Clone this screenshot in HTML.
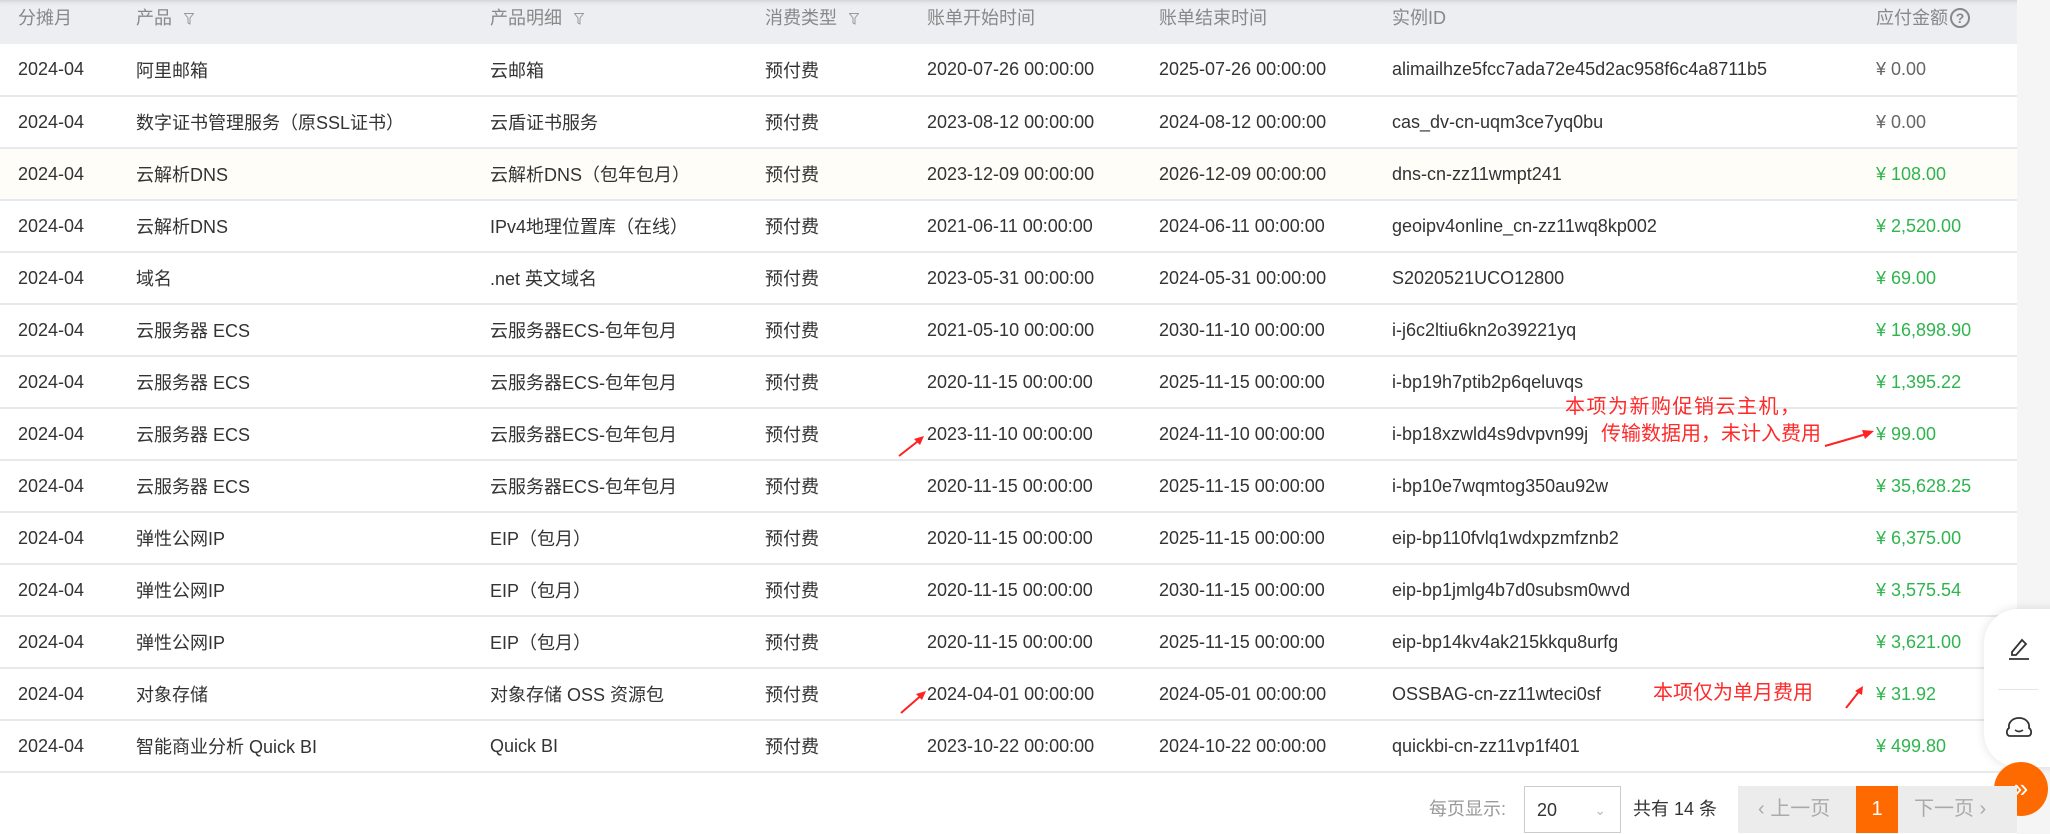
<!DOCTYPE html>
<html><head><meta charset="utf-8"><style>
*{margin:0;padding:0;box-sizing:border-box}
body{width:2050px;height:834px;background:#fff;font-family:"Liberation Sans","Noto Sans CJK SC",sans-serif;font-size:18px;color:#333;position:relative;overflow:hidden}
.rs{position:absolute;left:2017px;top:0;width:33px;height:834px;background:#f5f5f5}
table{position:absolute;left:0;top:0;width:2017px;border-collapse:collapse;table-layout:fixed}
th{height:44px;background:#eceef1;color:#888;font-weight:normal;text-align:left;padding:0;vertical-align:top;padding-top:4px;box-shadow:inset 0 6px 6px -6px #bbb}
td{height:52px;border-bottom:2px solid #e8e9ec;padding:0;white-space:nowrap}
th:first-child,td:first-child{padding-left:18px}
tr.y td{background:#fffdf7}
.g{color:#2fb54e}.z{color:#666}
.f{display:inline-block;width:10px;height:12px;margin-left:12px;vertical-align:-1px}
.q{display:inline-block;width:20px;height:20px;border:2px solid #888;border-radius:50%;font-size:14px;line-height:16px;text-align:center;vertical-align:1px;font-weight:bold;margin-left:2px}
.red{position:absolute;color:#ff2a2a;font-size:20px;line-height:26px;white-space:nowrap}
.ar{position:absolute}
.panel{position:absolute;left:1984px;top:609px;width:80px;height:158px;background:#fff;border-radius:34px 0 0 34px;box-shadow:0 0 10px rgba(0,0,0,.12)}
.orb{position:absolute;left:1994px;top:762px;width:54px;height:54px;border-radius:50%;background:#ff6a00;color:#fff;font-size:26px;text-align:center;line-height:52px}
.pg{position:absolute;top:786px;height:47px;line-height:47px}
</style></head><body>
<div class="rs"></div>
<table>
<colgroup><col style="width:136px"><col style="width:354px"><col style="width:275px"><col style="width:162px"><col style="width:232px"><col style="width:233px"><col style="width:484px"><col style="width:141px"></colgroup>
<tr><th>分摊月</th><th>产品<svg class="f" viewBox="0 0 10 12"><path d="M0.5 0.5H9.5L6 5V11L4 10V5Z" fill="none" stroke="#999"/></svg></th><th>产品明细<svg class="f" viewBox="0 0 10 12"><path d="M0.5 0.5H9.5L6 5V11L4 10V5Z" fill="none" stroke="#999"/></svg></th><th>消费类型<svg class="f" viewBox="0 0 10 12"><path d="M0.5 0.5H9.5L6 5V11L4 10V5Z" fill="none" stroke="#999"/></svg></th><th>账单开始时间</th><th>账单结束时间</th><th>实例ID</th><th>应付金额<span class="q">?</span></th></tr>
<tr><td>2024-04</td><td>阿里邮箱</td><td>云邮箱</td><td>预付费</td><td>2020-07-26 00:00:00</td><td>2025-07-26 00:00:00</td><td>alimailhze5fcc7ada72e45d2ac958f6c4a8711b5</td><td class="z">¥ 0.00</td></tr>
<tr><td>2024-04</td><td>数字证书管理服务（原SSL证书）</td><td>云盾证书服务</td><td>预付费</td><td>2023-08-12 00:00:00</td><td>2024-08-12 00:00:00</td><td>cas_dv-cn-uqm3ce7yq0bu</td><td class="z">¥ 0.00</td></tr>
<tr class="y"><td>2024-04</td><td>云解析DNS</td><td>云解析DNS（包年包月）</td><td>预付费</td><td>2023-12-09 00:00:00</td><td>2026-12-09 00:00:00</td><td>dns-cn-zz11wmpt241</td><td class="g">¥ 108.00</td></tr>
<tr><td>2024-04</td><td>云解析DNS</td><td>IPv4地理位置库（在线）</td><td>预付费</td><td>2021-06-11 00:00:00</td><td>2024-06-11 00:00:00</td><td>geoipv4online_cn-zz11wq8kp002</td><td class="g">¥ 2,520.00</td></tr>
<tr><td>2024-04</td><td>域名</td><td>.net 英文域名</td><td>预付费</td><td>2023-05-31 00:00:00</td><td>2024-05-31 00:00:00</td><td>S2020521UCO12800</td><td class="g">¥ 69.00</td></tr>
<tr><td>2024-04</td><td>云服务器 ECS</td><td>云服务器ECS-包年包月</td><td>预付费</td><td>2021-05-10 00:00:00</td><td>2030-11-10 00:00:00</td><td>i-j6c2ltiu6kn2o39221yq</td><td class="g">¥ 16,898.90</td></tr>
<tr><td>2024-04</td><td>云服务器 ECS</td><td>云服务器ECS-包年包月</td><td>预付费</td><td>2020-11-15 00:00:00</td><td>2025-11-15 00:00:00</td><td>i-bp19h7ptib2p6qeluvqs</td><td class="g">¥ 1,395.22</td></tr>
<tr><td>2024-04</td><td>云服务器 ECS</td><td>云服务器ECS-包年包月</td><td>预付费</td><td>2023-11-10 00:00:00</td><td>2024-11-10 00:00:00</td><td>i-bp18xzwld4s9dvpvn99j</td><td class="g">¥ 99.00</td></tr>
<tr><td>2024-04</td><td>云服务器 ECS</td><td>云服务器ECS-包年包月</td><td>预付费</td><td>2020-11-15 00:00:00</td><td>2025-11-15 00:00:00</td><td>i-bp10e7wqmtog350au92w</td><td class="g">¥ 35,628.25</td></tr>
<tr><td>2024-04</td><td>弹性公网IP</td><td>EIP（包月）</td><td>预付费</td><td>2020-11-15 00:00:00</td><td>2025-11-15 00:00:00</td><td>eip-bp110fvlq1wdxpzmfznb2</td><td class="g">¥ 6,375.00</td></tr>
<tr><td>2024-04</td><td>弹性公网IP</td><td>EIP（包月）</td><td>预付费</td><td>2020-11-15 00:00:00</td><td>2030-11-15 00:00:00</td><td>eip-bp1jmlg4b7d0subsm0wvd</td><td class="g">¥ 3,575.54</td></tr>
<tr><td>2024-04</td><td>弹性公网IP</td><td>EIP（包月）</td><td>预付费</td><td>2020-11-15 00:00:00</td><td>2025-11-15 00:00:00</td><td>eip-bp14kv4ak215kkqu8urfg</td><td class="g">¥ 3,621.00</td></tr>
<tr><td>2024-04</td><td>对象存储</td><td>对象存储 OSS 资源包</td><td>预付费</td><td>2024-04-01 00:00:00</td><td>2024-05-01 00:00:00</td><td>OSSBAG-cn-zz11wteci0sf</td><td class="g">¥ 31.92</td></tr>
<tr><td>2024-04</td><td>智能商业分析 Quick BI</td><td>Quick BI</td><td>预付费</td><td>2023-10-22 00:00:00</td><td>2024-10-22 00:00:00</td><td>quickbi-cn-zz11vp1f401</td><td class="g">¥ 499.80</td></tr>
</table>
<div class="red" style="left:1565px;top:394px;letter-spacing:1.5px">本项为新购促销云主机，</div>
<div class="red" style="left:1601px;top:421px">传输数据用，未计入费用</div>
<div class="red" style="left:1653px;top:680px">本项仅为单月费用</div>
<svg class="ar" style="left:898px;top:434px" width="28" height="24" viewBox="0 0 28 24"><path d="M1 22L24 4" stroke="#f22" stroke-width="2"/><path d="M26 2L16 5L22 11Z" fill="#f22"/></svg>
<svg class="ar" style="left:1824px;top:428px" width="52" height="20" viewBox="0 0 52 20"><path d="M1 18L46 5" stroke="#f22" stroke-width="2"/><path d="M50 3L38 2L41 11Z" fill="#f22"/></svg>
<svg class="ar" style="left:900px;top:689px" width="28" height="26" viewBox="0 0 28 26"><path d="M1 24L24 4" stroke="#f22" stroke-width="2"/><path d="M26 2L16 5L22 11Z" fill="#f22"/></svg>
<svg class="ar" style="left:1845px;top:685px" width="20" height="24" viewBox="0 0 20 24"><path d="M1 23L16 4" stroke="#f22" stroke-width="2"/><path d="M18 1L10 6L17 10Z" fill="#f22"/></svg>
<div class="panel">
<svg style="position:absolute;left:22px;top:26px" width="26" height="26" viewBox="0 0 26 26"><path d="M6 17L16 5L20 9L10 20H6Z" fill="none" stroke="#333" stroke-width="1.8"/><path d="M3 24H23" stroke="#333" stroke-width="1.8"/></svg>
<div style="position:absolute;left:14px;top:80px;width:40px;height:1px;background:#e5e5e5"></div>
<svg style="position:absolute;left:21px;top:106px" width="28" height="24" viewBox="0 0 28 24"><path d="M5 21C1 21 1 15 4 13C3 7 8 3 14 3C20 3 25 7 24 13C27 15 27 21 23 21Z" fill="none" stroke="#333" stroke-width="1.8"/><path d="M10 15Q14 18 18 15" fill="none" stroke="#333" stroke-width="1.6"/></svg>
</div>
<div class="orb">»</div>
<div class="pg" style="left:1429px;color:#999">每页显示:</div>
<div class="pg" style="left:1524px;width:97px;border:1px solid #ccc;padding-left:12px">20<span style="position:absolute;right:14px;color:#bbb;font-size:14px">⌄</span></div>
<div class="pg" style="left:1633px;color:#333">共有 14 条</div>
<div class="pg" style="left:1738px;width:279px;background:#ececec;color:#aaa;font-size:20px"><span style="position:absolute;left:20px">‹ 上一页</span><span style="position:absolute;left:118px;width:42px;background:#ff6a00;color:#fff;text-align:center">1</span><span style="position:absolute;left:176px">下一页 ›</span></div>
</body></html>
